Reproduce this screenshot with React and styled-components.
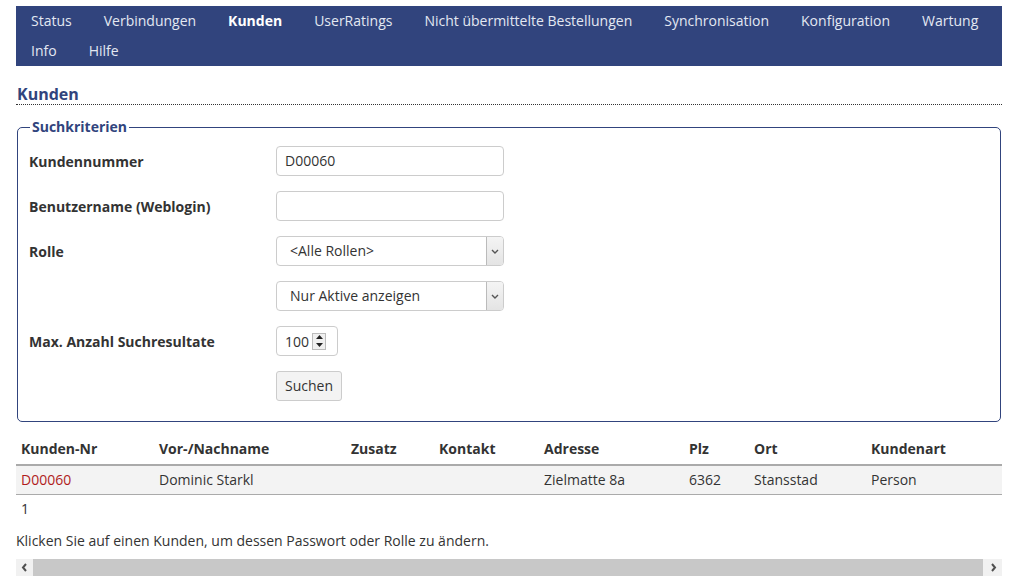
import React from "react";
import styled, { createGlobalStyle } from "styled-components";

const Global = createGlobalStyle`
  html, body { margin: 0; padding: 0; background: #fff; }
  body { font-family: "Open Sans", "Liberation Sans", sans-serif; font-size: 14px; color: #333; }
  * { box-sizing: border-box; }
`;

const Page = styled.div`
  padding: 6px 13px 0 16px;
`;

const Nav = styled.nav`
  background: #31447d;
  display: flex;
  flex-wrap: wrap;
`;

const NavItem = styled.a`
  display: block;
  height: 30px;
  line-height: 30px;
  padding: 0 17px 0 15px;
  color: ${(p) => (p.$active ? "#fff" : "#e3e8f2")};
  font-weight: ${(p) => (p.$active ? 700 : 400)};
  text-decoration: none;
  font-size: 14px;
  white-space: nowrap;
`;

const Title = styled.h2`
  margin: 19px 0 0 0;
  font-size: 16px;
  font-weight: 700;
  color: #31447d;
  line-height: 19px;
  padding-left: 1px;
  border-bottom: 1px dotted #333;
`;

const Fieldset = styled.fieldset`
  margin: 13px 1px 0 1px;
  border: 1px solid #31447d;
  border-radius: 5px;
  padding: 10px 11px 20px 11px;
`;

const Legend = styled.legend`
  font-weight: 700;
  color: #31447d;
  padding: 0 2px;
  margin-left: 1px;
  font-size: 14px;
  line-height: 18px;
`;

const FormGrid = styled.div`
  display: grid;
  grid-template-columns: 247px 1fr;
  row-gap: 15px;
  align-items: center;
`;

const Label = styled.label`
  font-weight: 700;
  color: #333;
`;

const TextBox = styled.div`
  width: ${(p) => p.$w || 228}px;
  height: 30px;
  border: 1px solid #ccc;
  border-radius: 4px;
  padding: 0 8px;
  line-height: 28px;
  background: #fff;
  color: #333;
`;

const SelectBox = styled.div`
  width: 228px;
  height: 30px;
  border: 1px solid #ccc;
  border-radius: 4px;
  display: flex;
  align-items: stretch;
  background: #fff;
  overflow: hidden;
`;

const SelectText = styled.span`
  flex: 1;
  padding-left: 13px;
  line-height: 28px;
`;

const SelectArrow = styled.span`
  width: 17px;
  border-left: 1px solid #bbb;
  background: linear-gradient(#f4f4f4, #e4e4e4);
  display: flex;
  align-items: center;
  justify-content: center;
`;

const NumberBox = styled.div`
  width: 62px;
  height: 30px;
  border: 1px solid #ccc;
  border-radius: 4px;
  display: flex;
  align-items: center;
  padding-left: 8px;
  gap: 3px;
`;

const Spinner = styled.span`
  width: 14px;
  height: 17px;
  border: 1px solid #bbb;
  background: #f0f0f0;
  display: flex;
  flex-direction: column;
  align-items: center;
  justify-content: space-around;
`;

const Button = styled.div`
  width: 66px;
  height: 30px;
  border: 1px solid #ccc;
  border-radius: 3px;
  background: #f3f3f3;
  text-align: center;
  line-height: 28px;
  color: #333;
`;

const Table = styled.table`
  width: 100%;
  border-collapse: collapse;
  margin-top: 12px;
  table-layout: fixed;
`;

const Th = styled.th`
  text-align: left;
  font-weight: 700;
  padding: 0 5px 1px;
  height: 31px;
  border-bottom: 2px solid #aaa;
  vertical-align: middle;
`;

const Td = styled.td`
  padding: 0 5px;
  height: 29px;
  background: #f3f3f3;
  border-bottom: 1px solid #aaa;
  color: ${(p) => (p.$link ? "#b01c1c" : "#333")};
`;

const Count = styled.div`
  padding: 4px 5px 0;
  line-height: 20px;
`;

const Hint = styled.p`
  margin: 12px 0 0 0;
  line-height: 20px;
`;

const ScrollBar = styled.div`
  margin-top: 8px;
  height: 17px;
  display: flex;
  background: #f1f1f1;
`;

const ScrollBtn = styled.span`
  width: 17px;
  display: flex;
  align-items: center;
  justify-content: center;
  background: #f1f1f1;
`;

const Thumb = styled.span`
  flex: 1;
  background: #c8c8c8;
  margin: 0 2px 0 0;
`;

const Chevron = ({ dir }) => (
  <svg width="7" height="9" viewBox="0 0 7 9">
    <path
      d={dir === "left" ? "M5 1 L2 4.5 L5 8" : "M2 1 L5 4.5 L2 8"}
      stroke="#505050"
      strokeWidth="2"
      fill="none"
    />
  </svg>
);

const Down = () => (
  <svg width="8" height="5" viewBox="0 0 8 5">
    <path d="M1 1 L4 4 L7 1" stroke="#555" strokeWidth="1.4" fill="none" />
  </svg>
);

const navItems = [
  "Status",
  "Verbindungen",
  "Kunden",
  "UserRatings",
  "Nicht übermittelte Bestellungen",
  "Synchronisation",
  "Konfiguration",
  "Wartung",
  "Info",
  "Hilfe",
];

const cols = [
  ["Kunden-Nr", 138],
  ["Vor-/Nachname", 192],
  ["Zusatz", 88],
  ["Kontakt", 105],
  ["Adresse", 145],
  ["Plz", 65],
  ["Ort", 117],
  ["Kundenart", null],
];

const row = ["D00060", "Dominic Starkl", "", "", "Zielmatte 8a", "6362", "Stansstad", "Person"];

export default function App() {
  return (
    <Page>
      <Global />
      <Nav>
        {navItems.map((n) => (
          <NavItem key={n} $active={n === "Kunden"}>
            {n}
          </NavItem>
        ))}
      </Nav>
      <Title>Kunden</Title>
      <Fieldset>
        <Legend>Suchkriterien</Legend>
        <FormGrid>
          <Label>Kundennummer</Label>
          <TextBox>D00060</TextBox>
          <Label>Benutzername (Weblogin)</Label>
          <TextBox />
          <Label>Rolle</Label>
          <SelectBox>
            <SelectText>&lt;Alle Rollen&gt;</SelectText>
            <SelectArrow>
              <Down />
            </SelectArrow>
          </SelectBox>
          <span />
          <SelectBox>
            <SelectText>Nur Aktive anzeigen</SelectText>
            <SelectArrow>
              <Down />
            </SelectArrow>
          </SelectBox>
          <Label>Max. Anzahl Suchresultate</Label>
          <NumberBox>
            100
            <Spinner>
              <svg width="7" height="4" viewBox="0 0 7 4">
                <path d="M0 4 L3.5 0 L7 4 Z" fill="#222" />
              </svg>
              <svg width="7" height="4" viewBox="0 0 7 4">
                <path d="M0 0 L3.5 4 L7 0 Z" fill="#222" />
              </svg>
            </Spinner>
          </NumberBox>
          <span />
          <Button>Suchen</Button>
        </FormGrid>
      </Fieldset>
      <Table>
        <colgroup>
          {cols.map(([c, w]) => (
            <col key={c} style={w ? { width: w } : undefined} />
          ))}
        </colgroup>
        <thead>
          <tr>
            {cols.map(([c]) => (
              <Th key={c}>{c}</Th>
            ))}
          </tr>
        </thead>
        <tbody>
          <tr>
            {row.map((v, i) => (
              <Td key={i} $link={i === 0}>
                {v}
              </Td>
            ))}
          </tr>
        </tbody>
      </Table>
      <Count>1</Count>
      <Hint>Klicken Sie auf einen Kunden, um dessen Passwort oder Rolle zu ändern.</Hint>
      <ScrollBar>
        <ScrollBtn>
          <Chevron dir="left" />
        </ScrollBtn>
        <Thumb />
        <ScrollBtn>
          <Chevron dir="right" />
        </ScrollBtn>
      </ScrollBar>
    </Page>
  );
}
